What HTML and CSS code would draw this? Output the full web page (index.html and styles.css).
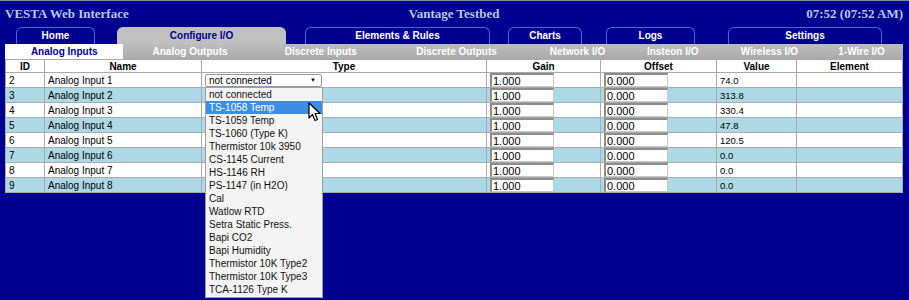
FILE: index.html
```html
<!DOCTYPE html>
<html lang="en">
<head>
  <meta charset="UTF-8">
  <title>VESTA Web Interface</title>
  <link rel="stylesheet" href="styles.css">
</head>

<body>

  <div class="page">

    <header class="topbar">
      <div class="site-title">VESTA Web Interface</div>
      <div class="site-name">Vantage Testbed</div>
      <div class="site-time">07:52 (07:52 AM)</div>
    </header>

    <nav class="tabs">
      <a class="tab tab-home">Home</a>
      <a class="tab tab-config active">Configure I/O</a>
      <a class="tab tab-rules">Elements &amp; Rules</a>
      <a class="tab tab-charts">Charts</a>
      <a class="tab tab-logs">Logs</a>
      <a class="tab tab-settings">Settings</a>
    </nav>

    <ul class="subtabs">
      <li class="active">Analog Inputs</li>
      <li>Analog Outputs</li>
      <li>Discrete Inputs</li>
      <li>Discrete Outputs</li>
      <li>Network I/O</li>
      <li>Insteon I/O</li>
      <li>Wireless I/O</li>
      <li>1-Wire I/O</li>
    </ul>

    <table class="io-table">
      <colgroup>
        <col class="c-id">
        <col class="c-name">
        <col class="c-type">
        <col class="c-gain">
        <col class="c-offset">
        <col class="c-value">
        <col class="c-element">
      </colgroup>
      <thead>
        <tr>
          <th>ID</th>
          <th>Name</th>
          <th>Type</th>
          <th>Gain</th>
          <th>Offset</th>
          <th>Value</th>
          <th>Element</th>
        </tr>
      </thead>
      <tbody>
        <tr>
          <td>2</td>
          <td>Analog Input 1</td>
          <td>
            <div class="type-select">
              <div class="select-box">not connected<span class="arrow">&#9660;</span></div>
              <ul class="select-list">
                <li>not connected</li>
                <li class="hover">TS-1058 Temp</li>
                <li>TS-1059 Temp</li>
                <li>TS-1060 (Type K)</li>
                <li>Thermistor 10k 3950</li>
                <li>CS-1145 Current</li>
                <li>HS-1146 RH</li>
                <li>PS-1147 (in H2O)</li>
                <li>Cal</li>
                <li>Watlow RTD</li>
                <li>Setra Static Press.</li>
                <li>Bapi CO2</li>
                <li>Bapi Humidity</li>
                <li>Thermistor 10K Type2</li>
                <li>Thermistor 10K Type3</li>
                <li>TCA-1126 Type K</li>
              </ul>
              <svg class="cursor" width="13" height="20" viewBox="0 0 13 20">
                <path d="M1 1 L1 16 L4.5 12.5 L7 18.5 L9.5 17.5 L7 11.5 L12 11.5 Z" fill="#fff" stroke="#000" stroke-width="1.2" stroke-linejoin="round"/>
              </svg>
            </div>
          </td>
          <td><input class="num" value="1.000"></td>
          <td><input class="num" value="0.000"></td>
          <td class="value">74.0</td>
          <td></td>
        </tr>
        <tr class="alt">
          <td>3</td>
          <td>Analog Input 2</td>
          <td></td>
          <td><input class="num" value="1.000"></td>
          <td><input class="num" value="0.000"></td>
          <td class="value">313.8</td>
          <td></td>
        </tr>
        <tr>
          <td>4</td>
          <td>Analog Input 3</td>
          <td></td>
          <td><input class="num" value="1.000"></td>
          <td><input class="num" value="0.000"></td>
          <td class="value">330.4</td>
          <td></td>
        </tr>
        <tr class="alt">
          <td>5</td>
          <td>Analog Input 4</td>
          <td></td>
          <td><input class="num" value="1.000"></td>
          <td><input class="num" value="0.000"></td>
          <td class="value">47.8</td>
          <td></td>
        </tr>
        <tr>
          <td>6</td>
          <td>Analog Input 5</td>
          <td></td>
          <td><input class="num" value="1.000"></td>
          <td><input class="num" value="0.000"></td>
          <td class="value">120.5</td>
          <td></td>
        </tr>
        <tr class="alt">
          <td>7</td>
          <td>Analog Input 6</td>
          <td></td>
          <td><input class="num" value="1.000"></td>
          <td><input class="num" value="0.000"></td>
          <td class="value">0.0</td>
          <td></td>
        </tr>
        <tr>
          <td>8</td>
          <td>Analog Input 7</td>
          <td></td>
          <td><input class="num" value="1.000"></td>
          <td><input class="num" value="0.000"></td>
          <td class="value">0.0</td>
          <td></td>
        </tr>
        <tr class="alt">
          <td>9</td>
          <td>Analog Input 8</td>
          <td></td>
          <td><input class="num" value="1.000"></td>
          <td><input class="num" value="0.000"></td>
          <td class="value">0.0</td>
          <td></td>
        </tr>
      </tbody>
    </table>

  </div>

</body>
</html>
```

FILE: styles.css
```css
body {
  margin: 0;
  padding: 0;
  background: #000090;
  font-family: 'Liberation Sans', Arial, sans-serif;
  font-size: 10px;
  border-top: 1px solid #8a8a9a;
  height: 299px;
  overflow: hidden;
}

.page {
  padding: 0 6px 0 5px;
}

/* title line */

.topbar {
  display: flex;
  justify-content: space-between;
  align-items: center;
  height: 26px;
  font-family: 'Liberation Serif', 'Times New Roman', serif;
  font-weight: bold;
  font-size: 13px;
  color: #b4c8ea;
}

.site-title {
  width: 300px;
}

.site-name {
  flex: 1;
  text-align: center;
}

.site-time {
  width: 300px;
  text-align: right;
}

/* main tabs */

.tabs {
  display: flex;
  align-items: flex-end;
  height: 17px;
  padding-left: 11px;
}

.tab {
  display: block;
  box-sizing: border-box;
  height: 17px;
  padding-top: 2px;
  border: 1px solid #3a6ee0;
  border-bottom: none;
  border-radius: 6px 6px 0 0;
  color: #fff;
  font-weight: bold;
  font-size: 10px;
  text-align: center;
}

.tab.active {
  background: #c0c0c0;
  border-color: #c0c0c0;
  color: #000090;
}

.tab-home { width: 79px; }
.tab-config { width: 169px; margin-left: 22px; }
.tab-rules { width: 185px; margin-left: 19px; }
.tab-charts { width: 74px; margin-left: 18px; }
.tab-logs { width: 89px; margin-left: 24px; }
.tab-settings { width: 154px; margin-left: 33px; }

/* sub tabs */

.subtabs {
  display: table;
  width: 100%;
  margin: 0;
  padding: 0;
  list-style: none;
  background: linear-gradient(#bdbdbd, #a9a9a9);
}

.subtabs li {
  display: table-cell;
  height: 15px;
  text-align: center;
  vertical-align: middle;
  font-weight: bold;
  color: #fff;
  white-space: nowrap;
}

.subtabs li.active {
  background: #fff;
  color: #000090;
}

/* io table */

.io-table {
  width: 100%;
  table-layout: fixed;
  border-collapse: collapse;
  background: #fff;
  color: #000;
}

.c-id { width: 39px; }
.c-name { width: 157px; }
.c-type { width: 285px; }
.c-gain { width: 114px; }
.c-offset { width: 116px; }
.c-value { width: 80px; }

.io-table th,
.io-table td {
  border: 1px solid #aaa;
  padding: 0 3px;
  text-align: left;
  white-space: nowrap;
}

.io-table th {
  height: 12px;
  text-align: center;
  font-weight: bold;
}

.io-table td {
  height: 14px;
}

.io-table tr.alt td {
  background: #add8e6;
}

.io-table td.value {
  font-size: 9.5px;
}

.num {
  display: block;
  box-sizing: border-box;
  width: 64px;
  height: 14px;
  margin: 0;
  padding: 0 1px;
  border: 1px solid #c8c8c8;
  border-top: 2px solid #8c8c8c;
  border-left: 2px solid #8c8c8c;
  background: #fff;
  font-family: 'Liberation Sans', Arial, sans-serif;
  font-size: 11px;
  color: #000;
}

/* type dropdown */

.type-select {
  position: relative;
  width: 117px;
}

.select-box {
  position: relative;
  box-sizing: border-box;
  height: 13px;
  padding-left: 3px;
  line-height: 11px;
  border: 1px solid #8a9ac0;
  border-radius: 2px;
  background: #fff;
  font-size: 10px;
}

.select-box .arrow {
  position: absolute;
  right: 5px;
  top: 0;
  font-size: 6px;
}

.select-list {
  position: absolute;
  top: 13px;
  left: 0;
  z-index: 2;
  box-sizing: border-box;
  width: 118px;
  margin: 0;
  padding: 0 0 1px;
  list-style: none;
  background: #f4f4f4;
  border: 1px solid #a0a0a0;
}

.select-list li {
  height: 13px;
  line-height: 13px;
  padding-left: 3px;
  font-size: 10px;
  color: #111;
}

.select-list li.hover {
  background: #3d8ee2;
  color: #fff;
}

.cursor {
  position: absolute;
  left: 103px;
  top: 28px;
  z-index: 3;
}
```
